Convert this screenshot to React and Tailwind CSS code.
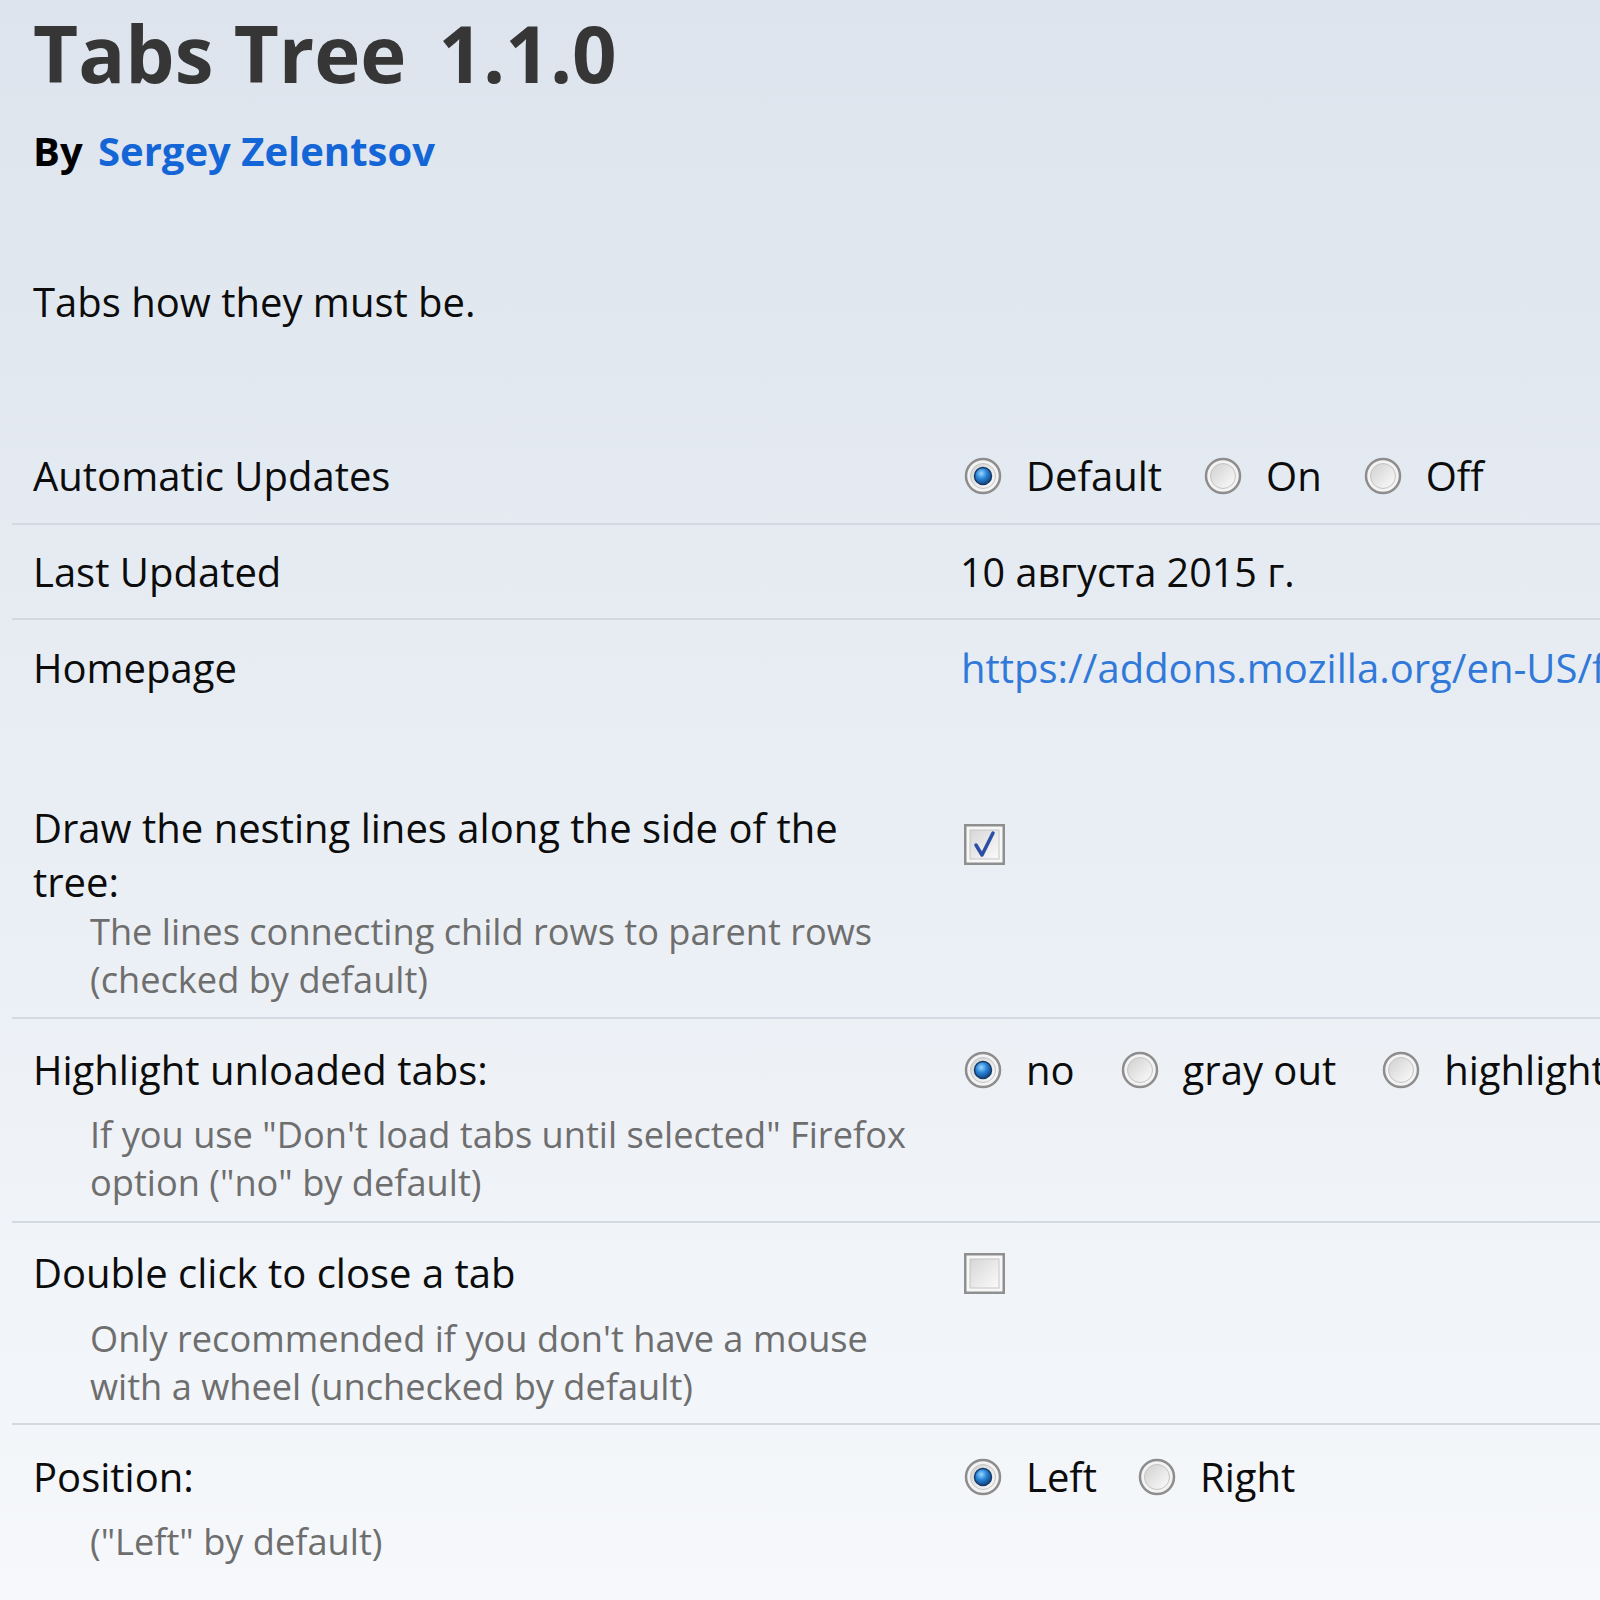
import React from "react";

// Windows 7 style radio button
const Radio = ({ checked }) => (
  <svg width="38" height="38" viewBox="0 0 38 38" className="shrink-0">
    <defs>
      <linearGradient id="radioFace" x1="0" y1="0" x2="1" y2="1">
        <stop offset="0" stopColor="#cfcfcf" />
        <stop offset="1" stopColor="#fdfdfd" />
      </linearGradient>
      <radialGradient id="radioDot" cx="0.4" cy="0.35" r="0.7">
        <stop offset="0" stopColor="#9ad8ff" />
        <stop offset="0.45" stopColor="#2b86d8" />
        <stop offset="1" stopColor="#0c3d7a" />
      </radialGradient>
    </defs>
    <circle cx="19" cy="19" r="17" fill="#f3f3f3" stroke="#8d8d8d" strokeWidth="2.5" />
    <circle cx="19" cy="19" r="12.5" fill="url(#radioFace)" stroke="#c4c4c4" strokeWidth="1" />
    {checked && (
      <circle cx="19" cy="19" r="8.5" fill="url(#radioDot)" stroke="#173b66" strokeWidth="1.5" />
    )}
  </svg>
);

const Checkbox = ({ checked }) => (
  <svg width="41" height="41" viewBox="0 0 41 41" className="shrink-0">
    <defs>
      <linearGradient id="boxFace" x1="0" y1="0" x2="1" y2="1">
        <stop offset="0" stopColor="#d6d6d6" />
        <stop offset="1" stopColor="#fbfbfb" />
      </linearGradient>
    </defs>
    <rect x="1.25" y="1.25" width="38.5" height="38.5" fill="#f7f7f7" stroke="#8f8f8f" strokeWidth="2.5" />
    <rect x="6" y="6" width="29" height="29" fill="url(#boxFace)" stroke="#c6c6c6" strokeWidth="1" />
    {checked && (
      <path
        d="M12 21 L18 31 L29 9"
        fill="none"
        stroke="#2c4ea6"
        strokeWidth="3.5"
        strokeLinecap="round"
        strokeLinejoin="round"
      />
    )}
  </svg>
);

const Option = ({ checked, label }) => (
  <div className="flex items-center gap-[24px] shrink-0">
    <Radio checked={checked} />
    <span className="whitespace-nowrap">{label}</span>
  </div>
);

const Desc = ({ children, className = "" }) => (
  <div className={`pl-[57px] text-[36.2px] leading-[48px] whitespace-nowrap text-[#6e6e6e] ${className}`}>
    {children}
  </div>
);

export default function App() {
  return (
    <div className="w-[1600px] h-[1600px] overflow-hidden bg-gradient-to-b from-[#dde4ed] via-[#e9eef4] to-[#f6f8fb] font-['Open_Sans','Noto_Sans',sans-serif] text-[40px] text-[#0c0c0c]">
      <div className="pl-[12px] pt-[8px]">
        <div className="pl-[21px]">
          <h1 className="flex items-baseline text-[78px] font-bold leading-[90px] text-[#363636]">
            <span>Tabs Tree</span>
            <span className="ml-[32px]">1.1.0</span>
          </h1>
          <div className="mt-[28px] text-[40px] font-bold leading-[50px] text-black">
            By <a className="ml-[5px] text-[#1466d6]">Sergey Zelentsov</a>
          </div>
          <p className="mt-[99px] leading-[54px]">Tabs how they must be.</p>
        </div>

        {/* detail rows */}
        <div className="mt-[100px] flex border-b-2 border-[#d3d9e1] pl-[21px] pt-[20px] pb-[20px]">
          <div className="w-[931px] shrink-0 leading-[54px]">Automatic Updates</div>
          <div className="flex h-[54px] items-center gap-[42px]">
            <Option checked label="Default" />
            <Option label="On" />
            <Option label="Off" />
          </div>
        </div>

        <div className="flex border-b-2 border-[#d3d9e1] pl-[21px] pt-[20px] pb-[19px]">
          <div className="w-[931px] shrink-0 leading-[54px]">Last Updated</div>
          <div className="-ml-[4px] text-[39.5px] leading-[54px] whitespace-nowrap">10 августа 2015 г.</div>
        </div>

        <div className="flex pl-[21px] pt-[21px]">
          <div className="w-[931px] shrink-0 leading-[54px]">Homepage</div>
          <a className="-ml-[3px] leading-[54px] whitespace-nowrap text-[#3179d9]">
            https://addons.mozilla.org/en-US/firefox/addon/tabs-tree/
          </a>
        </div>

        {/* settings */}
        <div className="flex border-b-2 border-[#d3d9e1] pl-[21px] pt-[106px] pb-[14px]">
          <div className="w-[931px] shrink-0">
            <div className="leading-[54px]">
              Draw the nesting lines along the side of the
              <br />
              tree:
            </div>
            <Desc className="-mt-[2px]">
              The lines connecting child rows to parent rows
              <br />
              (checked by default)
            </Desc>
          </div>
          <div className="pt-[23px]">
            <Checkbox checked />
          </div>
        </div>

        <div className="flex border-b-2 border-[#d3d9e1] pl-[21px] pt-[24px] pb-[15px]">
          <div className="w-[931px] shrink-0">
            <div className="leading-[54px]">Highlight unloaded tabs:</div>
            <Desc className="mt-[13px]">
              If you use "Don't load tabs until selected" Firefox
              <br />
              option ("no" by default)
            </Desc>
          </div>
          <div className="flex h-[54px] items-center gap-[46px]">
            <Option checked label="no" />
            <Option label="gray out" />
            <Option label="highlight" />
          </div>
        </div>

        <div className="flex border-b-2 border-[#d3d9e1] pl-[21px] pt-[23px] pb-[13px]">
          <div className="w-[931px] shrink-0">
            <div className="leading-[54px]">Double click to close a tab</div>
            <Desc className="mt-[14px]">
              Only recommended if you don't have a mouse
              <br />
              with a wheel (unchecked by default)
            </Desc>
          </div>
          <div className="pt-[7px]">
            <Checkbox />
          </div>
        </div>

        <div className="flex pl-[21px] pt-[25px]">
          <div className="w-[931px] shrink-0">
            <div className="leading-[54px]">Position:</div>
            <Desc className="mt-[13px]">("Left" by default)</Desc>
          </div>
          <div className="flex h-[54px] items-center gap-[41px]">
            <Option checked label="Left" />
            <Option label="Right" />
          </div>
        </div>
      </div>
    </div>
  );
}
